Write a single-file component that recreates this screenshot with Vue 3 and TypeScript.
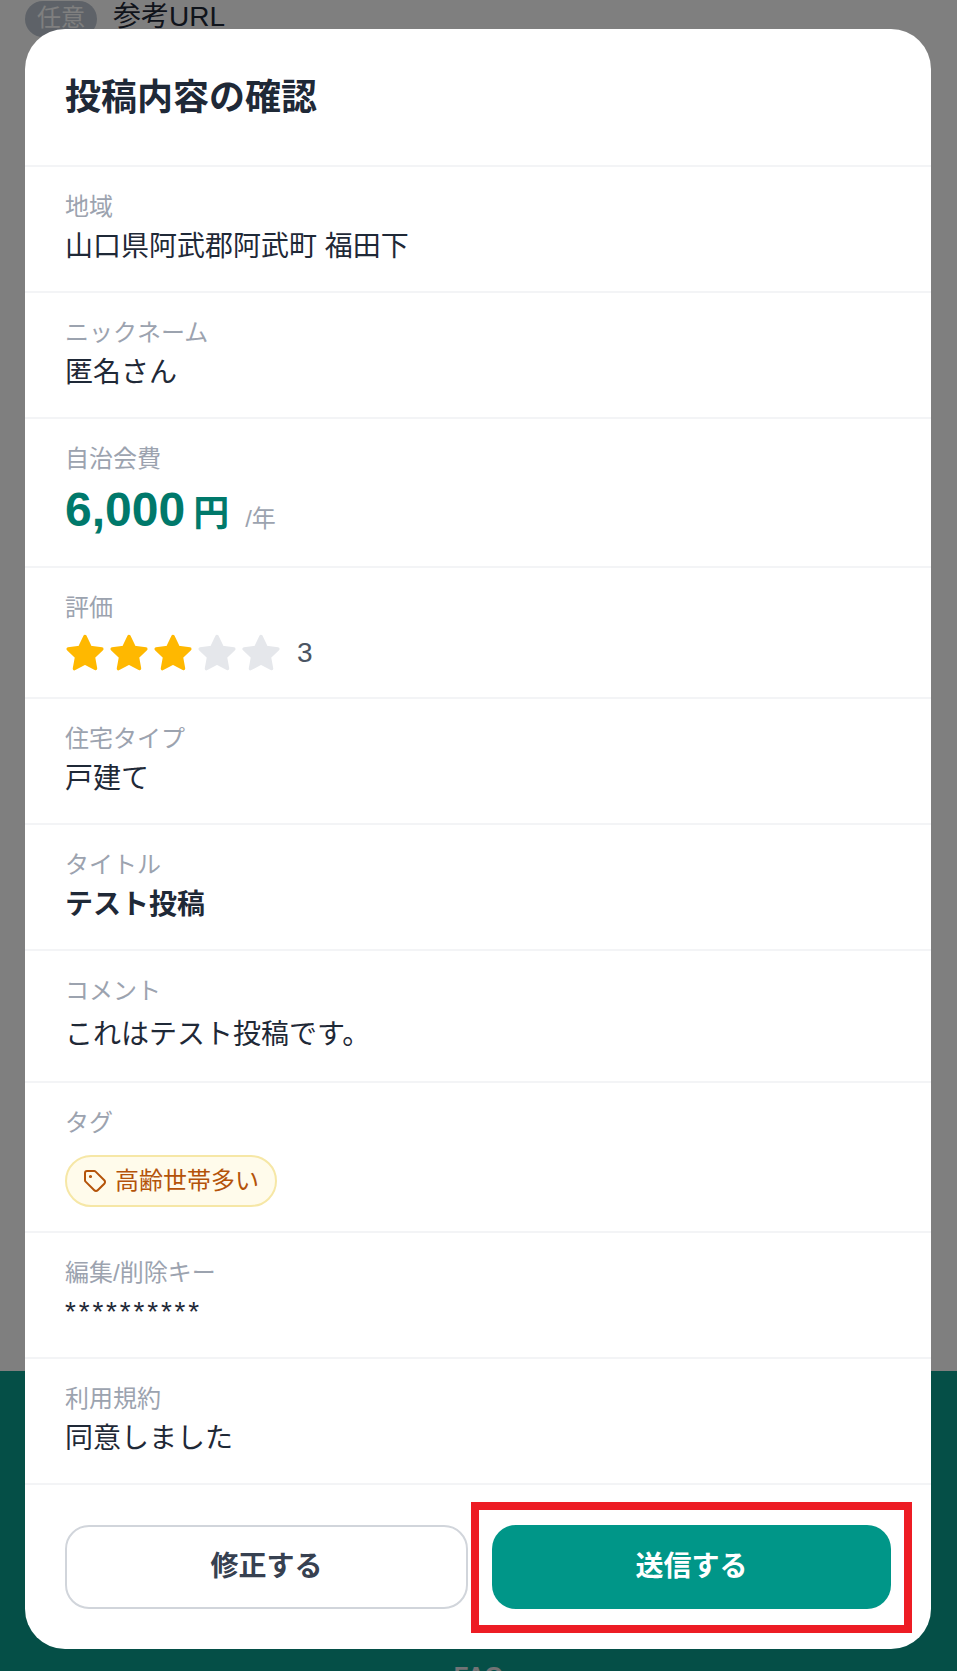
<script setup lang="ts">
interface Row { label: string; value: string; strong?: boolean }
const top: Row[] = [
  { label: '地域', value: '山口県阿武郡阿武町 福田下' },
  { label: 'ニックネーム', value: '匿名さん' }
]
const mid: Row[] = [
  { label: '住宅タイプ', value: '戸建て' },
  { label: 'タイトル', value: 'テスト投稿', strong: true }
]
const stars = [true, true, true, false, false]
const starPoints = '12,2.6 15,8.8 21.6,9.7 16.8,14.3 18,20.9 12,17.7 6,20.9 7.2,14.3 2.4,9.7 9,8.8'
</script>

<template>
  <div class="page">
    <div class="behind">
      <span class="opt">任意</span>
      <span class="behind-label">参考URL</span>
    </div>
    <div class="footer-band"><span class="faq">FAQ</span></div>
    <div class="overlay"></div>
    <section class="modal">
      <h2 class="title">投稿内容の確認</h2>
      <div v-for="r in top" :key="r.label" class="row">
        <div class="label">{{ r.label }}</div>
        <div class="value">{{ r.value }}</div>
      </div>
      <div class="row price-row">
        <div class="label">自治会費</div>
        <div class="price"><b class="num">6,000</b><b class="yen">円</b><span class="per">/年</span></div>
      </div>
      <div class="row rating-row">
        <div class="label">評価</div>
        <div class="stars">
          <svg v-for="(on, i) in stars" :key="i" class="star" :class="{ on }" viewBox="0 0 24 24" aria-hidden="true">
            <polygon :points="starPoints" />
          </svg>
          <span class="score">3</span>
        </div>
      </div>
      <div v-for="r in mid" :key="r.label" class="row">
        <div class="label">{{ r.label }}</div>
        <div class="value" :class="{ strong: r.strong }">{{ r.value }}</div>
      </div>
      <div class="row comment-row">
        <div class="label">コメント</div>
        <div class="value comment">これはテスト投稿です。</div>
      </div>
      <div class="row tag-row">
        <div class="label">タグ</div>
        <span class="tag">
          <svg class="tag-icon" viewBox="0 0 24 24" fill="none" stroke="currentColor" stroke-width="2" stroke-linecap="round" stroke-linejoin="round" aria-hidden="true">
            <path d="M12.6 2.6A2 2 0 0 0 11.2 2H4a2 2 0 0 0-2 2v7.2a2 2 0 0 0 .6 1.4l8.7 8.7a2.4 2.4 0 0 0 3.4 0l6.6-6.6a2.4 2.4 0 0 0 0-3.4z" />
            <circle cx="7.5" cy="7.5" r=".6" fill="currentColor" />
          </svg>
          <span class="tag-text">高齢世帯多い</span>
        </span>
      </div>
      <div class="row">
        <div class="label">編集/削除キー</div>
        <div class="value masked">**********</div>
      </div>
      <div class="row">
        <div class="label">利用規約</div>
        <div class="value">同意しました</div>
      </div>
      <div class="actions">
        <button class="btn ghost" type="button">修正する</button>
        <button class="btn primary" type="button">送信する</button>
        <span class="highlight"></span>
      </div>
    </section>
  </div>
</template>

<style>
html, body { margin: 0; }
</style>

<style scoped>
* { box-sizing: border-box; }
.page {
  position: relative;
  width: 957px;
  height: 1671px;
  overflow: hidden;
  background: #fff;
  font-family: "Liberation Sans", "Noto Sans CJK JP", sans-serif;
  color: #1f2937;
}
.behind {
  display: flex;
  align-items: flex-start;
  gap: 16px;
  padding: 1px 0 0 25px;
}
.opt {
  width: 72px;
  height: 36px;
  line-height: 34px;
  border-radius: 18px;
  background: #bcc5d0;
  color: #fff;
  text-align: center;
  font-size: 24px;
}
.behind-label { font-size: 28px; line-height: 32px; color: #1f2937; }
.footer-band {
  position: absolute;
  left: 0;
  right: 0;
  top: 1371px;
  bottom: 0;
  background: #0a9f8f;
  text-align: center;
}
.faq {
  position: absolute;
  left: 0;
  right: 0;
  top: 291px;
  color: #e5e7eb;
  font-size: 24px;
  font-weight: 700;
}
.overlay {
  position: absolute;
  inset: 0;
  background: rgba(0, 0, 0, 0.5);
}
.modal {
  position: absolute;
  left: 25px;
  top: 29px;
  width: 906px;
  height: 1620px;
  background: #fff;
  border-radius: 40px;
  overflow: hidden;
}
.title {
  margin: 0;
  padding: 42px 40px 40px;
  height: 138px;
  font-size: 36px;
  line-height: 54px;
  font-weight: 700;
  border-bottom: 2px solid #f3f4f6;
}
.row {
  padding: 22px 40px;
  height: 126px;
  border-bottom: 2px solid #f3f4f6;
}
.price-row { height: 149px; }
.rating-row { height: 131px; }
.comment-row { height: 132px; }
.tag-row { height: 150px; }
.label {
  font-size: 24px;
  line-height: 36px;
  color: #9ca3af;
  margin-bottom: 1px;
}
.value {
  font-size: 28px;
  line-height: 42px;
  color: #1f2937;
}
.value.strong { font-weight: 700; }
.masked { letter-spacing: 0.1em; margin-top: -1px; }
.comment { line-height: 48px; margin-top: 2px; }
.price {
  display: flex;
  align-items: baseline;
  color: #00796b;
  line-height: 60px;
  margin-top: 3px;
}
.num { font-size: 48px; }
.yen { font-size: 36px; margin-left: 8px; }
.per { font-size: 24px; color: #9ca3af; margin-left: 16px; transform: translateY(1px); }
.stars {
  display: flex;
  align-items: center;
  margin-top: 6px;
  margin-left: -1px;
  gap: 2px;
}
.star { width: 42px; height: 42px; fill: #e5e7eb; stroke: #e5e7eb; stroke-width: 2; stroke-linejoin: round; }
.star.on { fill: #ffb800; stroke: #ffb800; }
.score { font-size: 28px; color: #4b5563; margin-left: 13px; }
.tag {
  display: inline-flex;
  align-items: center;
  gap: 8px;
  height: 52px;
  margin-top: 13px;
  padding: 0 16px;
  font-size: 24px;
  color: #b45309;
  background: #fffbeb;
  border: 2px solid #f6e7a6;
  border-radius: 26px;
}
.tag-text { margin-bottom: 6px; }
.tag-icon { width: 24px; height: 24px; }
.actions {
  position: relative;
  display: flex;
  gap: 24px;
  padding: 40px 40px 0;
}
.btn {
  flex: 1;
  height: 84px;
  padding: 0 0 6px;
  border-radius: 24px;
  font-family: inherit;
  font-size: 28px;
  font-weight: 700;
}
.ghost { background: #fff; color: #374151; border: 2px solid #d1d5db; }
.primary { background: #009688; color: #fff; border: 0; }
.highlight {
  position: absolute;
  left: 446px;
  top: 17px;
  width: 441px;
  height: 131px;
  border: 8px solid #ed1c24;
  pointer-events: none;
}
</style>
